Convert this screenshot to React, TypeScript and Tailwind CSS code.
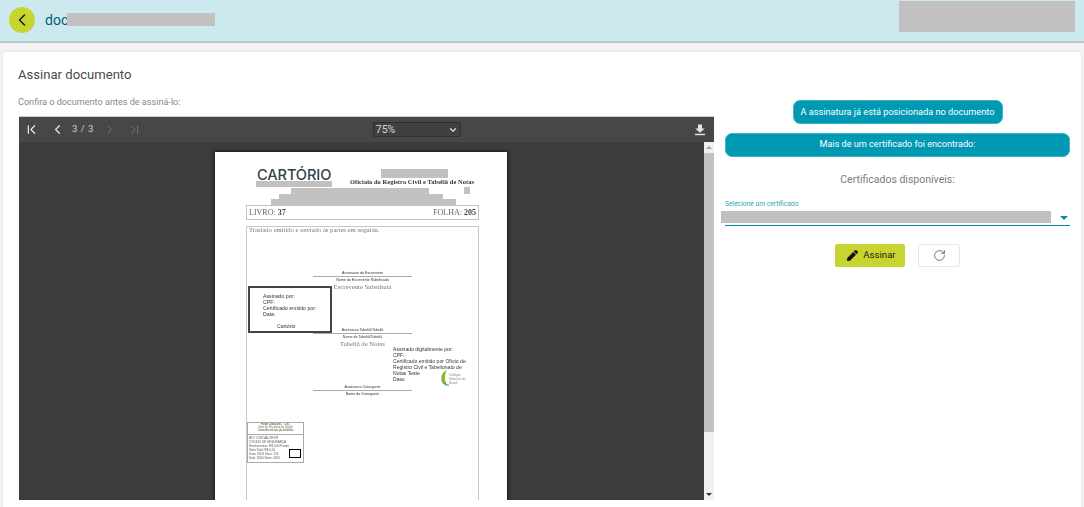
import React from "react";
import { ChevronFirst, ChevronLast, ChevronLeft, ChevronRight, ChevronDown, RotateCw } from "lucide-react";
import { FaPen } from "react-icons/fa";

const Redact = ({ className = "" }: { className?: string }) => <div className={`bg-[#c1c1c1] ${className}`} />;

function DocPage() {
  const serif = "font-['Liberation_Serif',serif] blur-[0.25px]";
  const sans = "font-['Liberation_Sans',sans-serif] blur-[0.25px]";
  return (
    <div className="relative w-[292px] h-[500px] shrink-0 bg-white shadow-[0_0_4px_#000] overflow-hidden text-[#333]">
      <div className="absolute left-[42px] top-[13px] text-[14.6px] leading-[20px] font-medium tracking-[-0.1px] text-[#2f4448] font-['Inter',sans-serif]">CARTÓRIO</div>
      <Redact className="absolute left-[41px] top-[29px] w-[76px] h-[6px]" />
      <Redact className="absolute left-[166px] top-[17px] w-[67px] h-[9px]" />
      <div className={`absolute left-[135px] top-[25px] text-[6.35px] leading-[10px] font-bold whitespace-nowrap tracking-[0.1px] ${serif}`}>Oficiala do Registro Civil e Tabeliã de Notas</div>
      <Redact className="absolute left-[76px] top-[36px] w-[138px] h-[6px]" />
      <Redact className="absolute left-[249px] top-[35px] w-[6px] h-[7px]" />
      <Redact className="absolute left-[64px] top-[42px] w-[164px] h-[5px]" />
      <Redact className="absolute left-[56px] top-[47px] w-[185px] h-[7px]" />

      <div className="absolute left-[31px] top-[53px] w-[233px] h-[15px] border border-[#c4c4c4]" />
      <div className={`absolute left-[31px] top-[53px] w-[233px] h-[15px] flex justify-between items-center px-[3px] text-[8px] text-[#666] ${serif}`}>
        <span>LIVRO: <b className="text-[#444]">37</b></span>
        <span>FOLHA: <b className="text-[#444]">205</b></span>
      </div>

      <div className="absolute left-[31px] top-[74px] w-[233px] h-[440px] border border-[#c8c8c8]" />
      <div className={`absolute left-[34px] top-[73px] text-[6.65px] leading-[10px] whitespace-nowrap text-[#777] ${serif}`}>Traslado emitido e enviado às partes em seguida.</div>

      <div className={`absolute left-[98px] top-[119px] w-[99px] text-center text-[3.6px] leading-[4px] ${sans}`}>Assinatura do Escrevente</div>
      <div className="absolute left-[98px] top-[124px] w-[99px] h-px bg-[#aaa]" />
      <div className={`absolute left-[98px] top-[126px] w-[99px] text-center text-[3.6px] leading-[4px] ${sans}`}>Nome do Escrevente Rubrificado</div>
      <div className={`absolute left-[98px] top-[130px] w-[99px] text-center text-[6.7px] leading-[9px] text-[#777] ${serif}`}>Escrevente Substituta</div>

      <div className="absolute left-[33px] top-[134px] w-[84px] h-[47px] border-2 border-[#444] bg-white" />
      <div className={`absolute left-[48px] top-[141px] text-[5.2px] leading-[6px] whitespace-nowrap ${sans}`}>
        <div>Assinado por:</div>
        <div>CPF:</div>
        <div>Certificado emitido por:</div>
        <div>Data:</div>
        <div className="pl-[14px] pt-[6px]">Cartório</div>
      </div>

      <div className={`absolute left-[98px] top-[176px] w-[99px] text-center text-[3.6px] leading-[4px] ${sans}`}>Assinatura Tabeliã/Tabeliã</div>
      <div className="absolute left-[98px] top-[181px] w-[99px] h-px bg-[#aaa]" />
      <div className={`absolute left-[98px] top-[183px] w-[99px] text-center text-[3.6px] leading-[4px] ${sans}`}>Nome do Tabeliã/Tabeliã</div>
      <div className={`absolute left-[98px] top-[187px] w-[99px] text-center text-[6.7px] leading-[10px] text-[#777] ${serif}`}>Tabeliã de Notas</div>

      <div className={`absolute left-[178px] top-[194px] w-[90px] text-[5.1px] leading-[6px] ${sans}`}>
        <div>Assinado digitalmente por:</div>
        <div>CPF:</div>
        <div>Certificado emitido por Ofício de</div>
        <div>Registro Civil e Tabelionato de</div>
        <div>Notas Teste</div>
        <div>Data:</div>
      </div>
      <svg className="absolute left-[225px] top-[217px]" width="28" height="18" viewBox="0 0 28 18">
        <path d="M7 1 C2 3 0 9 2 13 C3 15 5 16 8 16 C4 13 4 6 7 1Z" fill="#8ab52c" />
        <path d="M3 14 C5 16 7 16.500 9 16" stroke="#1aa0a8" strokeWidth="1" fill="none" />
        <text x="9" y="7" fontSize="3.400" fill="#888" fontFamily="Liberation Sans">Colégio</text>
        <text x="9" y="11" fontSize="3.400" fill="#888" fontFamily="Liberation Sans">Notarial do</text>
        <text x="9" y="15" fontSize="3.400" fill="#888" fontFamily="Liberation Sans">Brasil</text>
      </svg>

      <div className={`absolute left-[98px] top-[233px] w-[99px] text-center text-[3.6px] leading-[4px] ${sans}`}>Assinatura Outorgante</div>
      <div className="absolute left-[98px] top-[238px] w-[99px] h-px bg-[#aaa]" />
      <div className={`absolute left-[98px] top-[240px] w-[99px] text-center text-[3.6px] leading-[4px] ${sans}`}>Nome do Outorgante</div>

      <div className="absolute left-[32px] top-[270px] w-[57px] h-[41px] border border-[#aaa] bg-white" />
      <div className="absolute left-[32px] top-[282px] w-[57px] h-px bg-[#aaa]" />
      <div className={`absolute left-[33px] top-[271px] w-[55px] text-center text-[2.8px] leading-[3px] whitespace-nowrap overflow-hidden ${sans}`}>
        <div>Poder Judiciário - TJSC</div>
        <div className="text-[#5a7a20]">Selo de Fiscalização Digital</div>
        <div>Consulte em tjsc.jus.br/selos</div>
      </div>
      <div className={`absolute left-[34px] top-[284px] text-[3px] leading-[4px] whitespace-nowrap text-[#556] ${sans}`}>
        <div>ATO COM VALOR FÉ</div>
        <div>CÓDIGO DE SEGURANÇA</div>
        <div>Emolumentos: R$ 0,00 Fundo</div>
        <div>Valor Total: R$ 0,00</div>
        <div>Data: 01/01 Hora: 12h</div>
        <div>Selo: X000 Série: 0000</div>
      </div>
      <div className="absolute left-[74px] top-[297px] w-[12px] h-[9px] border border-black bg-white" />
    </div>
  );
}

export default function App() {
  return (
    <div className="w-[1084px] h-[507px] overflow-hidden bg-[#f3f3f3] flex flex-col font-['Roboto',sans-serif]">
      <header className="h-[43px] shrink-0 bg-[#cce9f0] border-b-[2px] border-[#bdc5c8] flex items-center pl-[9px] pr-[9px] pb-[2px]">
        <button className="w-[26px] h-[26px] rounded-full bg-[#c6d52f] flex items-center justify-center">
          <ChevronLeft size={20} strokeWidth={1.6} className="text-[#111] -ml-[1px]" />
        </button>
        <div className="ml-[10px] flex items-center">
          <span className="text-[14px] text-[#00617c] leading-none">doc</span>
          <Redact className="-ml-[1px] w-[148px] h-[13px]" />
        </div>
        <Redact className="ml-auto mb-[7px] w-[176px] h-[31px]" />
      </header>

      <main className="mx-[3px] mt-[9px] flex-1 bg-white rounded-t-[3px] shadow-[0_0_3px_#ddd] pl-[16px] pr-[11px] flex flex-col min-h-0">
        <h1 className="mt-[15px] -ml-[1px] text-[13.1px] leading-[16px] text-[#4a4a4a] font-normal">Assinar documento</h1>
        <div className="flex mt-[13px] min-h-0">
          <section className="w-[695px] shrink-0">
            <p className="-ml-[1px] text-[9.1px] leading-[12px] text-[#8a8a8a]">Confira o documento antes de assiná-lo:</p>
            <div className="mt-[8px] h-[384px] flex flex-col bg-[#3c3c3c] border-t border-[#cfcfcf]">
              <div className="h-[25px] shrink-0 bg-[#474747] flex items-center text-[#e4e4e4]">
                <ChevronFirst size={15} strokeWidth={2} className="ml-[5px]" />
                <ChevronLeft size={15} strokeWidth={2} className="ml-[11px]" />
                <span className="ml-[7px] text-[9.5px] tracking-[0.5px] text-[#cfcfcf]">3 / 3</span>
                <ChevronRight size={15} strokeWidth={1.5} className="ml-[8px] text-[#7a7a7a]" />
                <ChevronLast size={15} strokeWidth={1.5} className="ml-[10px] text-[#7a7a7a]" />
                <div className="ml-[231px] w-[88px] h-[15px] rounded-[2px] border border-[#2f2f2f] bg-[#404040] flex items-center justify-between pl-[2px] pr-[2px] text-[10.5px] text-[#d8d8d8]">
                  <span>75%</span>
                  <ChevronDown size={10} strokeWidth={3} />
                </div>
                <svg className="ml-auto mr-[8px]" width="12" height="12" viewBox="0 0 12 12">
                  <path d="M4 0.500h4v4h2.800L6 8.800 1.200 4.500H4z" fill="#e4e4e4" />
                  <rect x="1" y="9.800" width="10" height="1.400" fill="#e4e4e4" />
                </svg>
              </div>
              <div className="flex-1 flex min-h-0">
                <div className="flex-1 flex justify-center pt-[10px] pr-[1px] overflow-hidden">
                  <DocPage />
                </div>
                <div className="w-[10px] bg-[#f0f0f0] flex flex-col items-center">
                  <div className="h-[11px] flex items-center justify-center">
                    <div className="w-0 h-0 border-x-[3px] border-x-transparent border-b-[3px] border-b-[#a3a3a3]" />
                  </div>
                  <div className="w-full h-[279px] bg-[#c1c1c1]" />
                  <div className="mt-auto h-[11px] flex items-center justify-center">
                    <div className="w-0 h-0 border-x-[3px] border-x-transparent border-t-[3px] border-t-[#333]" />
                  </div>
                </div>
              </div>
            </div>
          </section>

          <aside className="ml-[11px] flex-1 flex flex-col items-center">
            <div className="mt-[4px] w-[210px] h-[24px] rounded-[7px] bg-[#0099b3] border border-[#3fb3c7] text-white text-[9.2px] flex items-center justify-center">A assinatura já está posicionada no documento</div>
            <div className="mt-[9px] w-full h-[24px] rounded-[7px] bg-[#0099b3] border border-[#3fb3c7] text-white text-[9.1px] flex items-center justify-center">Mais de um certificado foi encontrado:</div>
            <p className="mt-[16px] text-[10.5px] leading-[14px] text-[#7c7c7c]">Certificados disponíveis:</p>
            <div className="self-stretch mt-[12px] relative">
              <label className="block text-[6.7px] leading-[10px] text-[#2aa8bf]">Selecione um certificado</label>
              <div className="h-[15px] mt-[2px] border-b border-[#0a8aa3] flex justify-end">
                <Redact className="absolute -left-[4px] top-[12px] w-[330px] h-[12px]" />
                <div className="mt-[5px] mr-[2px] w-0 h-0 border-x-[4px] border-x-transparent border-t-[4px] border-t-[#0a8aa3]" />
              </div>
            </div>
            <div className="mt-[18px] flex gap-[13px]">
              <button className="w-[70px] h-[23px] pl-[3px] rounded-[2px] bg-[#c6d52f] flex items-center justify-center gap-[5px] text-[9.6px] text-[#222]">
                <FaPen size={11} className="text-[#111]" />
                Assinar
              </button>
              <button className="w-[42px] h-[23px] rounded-[2px] bg-white border border-[#e8e8e8] flex items-center justify-center">
                <RotateCw size={13} strokeWidth={1.5} className="text-[#555]" />
              </button>
            </div>
          </aside>
        </div>
      </main>
    </div>
  );
}
